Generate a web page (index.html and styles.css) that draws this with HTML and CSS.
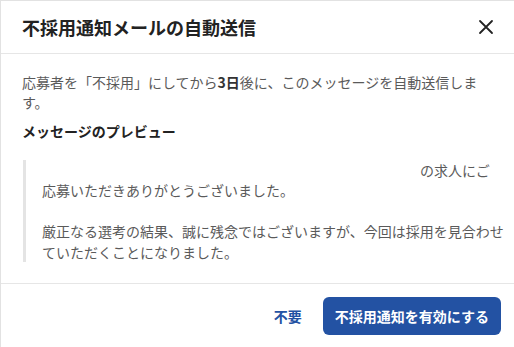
FILE: index.html
```html
<!DOCTYPE html>
<html lang="ja">
<head>
    <meta charset="UTF-8">
    <meta name="viewport" content="width=device-width, initial-scale=1.0">
    <title>不採用通知メールの自動送信</title>
    <link rel="stylesheet" href="styles.css">
</head>
<body>
    <div class="dialog">
        <div class="dialog-header">
            <h2 class="dialog-title">不採用通知メールの自動送信</h2>
            <button type="button" class="dialog-close" aria-label="閉じる">
                <svg width="16" height="16" viewBox="0 0 16 16">
                    <path d="M2 2 L14 14 M14 2 L2 14" stroke="#222" stroke-width="1.8" fill="none" stroke-linecap="round"/>
                </svg>
            </button>
        </div>

        <div class="dialog-body">
            <p class="dialog-text">応募者を「不採用」にしてから<strong>3日</strong>後に、このメッセージを自動送信します。</p>
            <h3 class="preview-title">メッセージのプレビュー</h3>
            <blockquote class="preview">
                <p><span class="job-name"></span>の求人にご<br>応募いただきありがとうございました。</p>
                <p class="blank">&nbsp;</p>
                <p>厳正なる選考の結果、誠に残念ではございますが、今回は採用を見合わせていただくことになりました。</p>
            </blockquote>
        </div>

        <div class="dialog-footer">
            <button type="button" class="btn-text">不要</button>
            <button type="button" class="btn-primary">不採用通知を有効にする</button>
        </div>
    </div>
</body>
</html>
```

FILE: styles.css
```css
* {
    box-sizing: border-box;
}

body {
    margin: 0;
    background-color: #ffffff;
    font-family: "Noto Sans CJK JP", "Noto Sans", sans-serif;
}

.dialog {
    width: 514px;
    height: 347px;
    border: 1px solid #e2e2e2;
    border-right: none;
    border-bottom: none;
    background-color: #ffffff;
    display: flex;
    flex-direction: column;
}

.dialog-header {
    height: 53px;
    padding: 0 20px 0 21px;
    display: flex;
    justify-content: space-between;
    align-items: center;
    border-bottom: 1px solid #e6e6e6;
}

.dialog-title {
    margin: 0;
    font-size: 18px;
    font-weight: bold;
    color: #222222;
}

.dialog-close {
    border: none;
    background: none;
    padding: 0;
    width: 16px;
    height: 16px;
    cursor: pointer;
}

.dialog-body {
    padding: 18px 24px 21px 21px;
}

.dialog-text {
    margin: 0;
    font-size: 14px;
    line-height: 20px;
    color: #5a5a5a;
}

.dialog-text strong {
    color: #333333;
}

.preview-title {
    margin: 9px 0 0;
    font-size: 14px;
    line-height: 20px;
    font-weight: bold;
    color: #222222;
}

.preview {
    margin: 19px -18px 0 1px;
    padding-left: 16px;
    border-left: 3px solid #e4e4e4;
    font-size: 14px;
    line-height: 20.5px;
    color: #5a5a5a;
}

.preview p {
    margin: 0;
}

.job-name {
    display: inline-block;
    width: 378px;
}

.dialog-footer {
    margin-top: auto;
    height: 64px;
    padding: 13px 13px 0 0;
    display: flex;
    justify-content: flex-end;
    align-items: flex-start;
    gap: 21px;
    border-top: 1px solid #e6e6e6;
}

.btn-text {
    height: 38px;
    border: none;
    background: none;
    padding: 0;
    font-family: inherit;
    font-size: 14px;
    font-weight: bold;
    color: #2352a3;
    cursor: pointer;
}

.btn-primary {
    height: 38px;
    padding: 0 12px;
    border: none;
    border-radius: 6px;
    background-color: #2352a3;
    font-family: inherit;
    font-size: 14px;
    font-weight: bold;
    color: #ffffff;
    cursor: pointer;
}
```
